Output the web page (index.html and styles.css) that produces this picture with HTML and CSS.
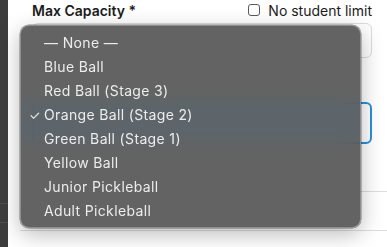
FILE: index.html
```html
<!DOCTYPE html>
<html>
<head>
<meta charset="utf-8">
<link rel="stylesheet" href="styles.css">
</head>
<body>
<div class="page">
  <aside class="sidebar">
    <div class="side-line first"></div>
    <div class="side-line"></div>
  </aside>
  <main class="main">
    <div class="label-row">
      <span class="label">Max Capacity *</span>
      <label class="check"><span class="box"></span>No student limit</label>
    </div>
    <div class="input plain"></div>
    <div class="input focused"></div>
    <div class="rule first-rule"></div>
    <div class="rule"></div>
  </main>
</div>
<ul class="menu">
  <li class="item">— None —</li>
  <li class="item">Blue Ball</li>
  <li class="item">Red Ball (Stage 3)</li>
  <li class="item selected"><span class="tick">✓</span>Orange Ball (Stage 2)</li>
  <li class="item">Green Ball (Stage 1)</li>
  <li class="item">Yellow Ball</li>
  <li class="item">Junior Pickleball</li>
  <li class="item">Adult Pickleball</li>
</ul>
</body>
</html>
```
FILE: styles.css
```css
html, body {
  margin: 0;
  padding: 0;
  background: #ffffff;
  width: 387px;
  height: 247px;
  overflow: hidden;
  font-family: Inter, "Liberation Sans", sans-serif;
}
.page {
  display: flex;
  height: 247px;
}
.sidebar {
  width: 8px;
  flex: none;
  background: #3d3d3d;
  display: flex;
  flex-direction: column;
}
.side-line {
  height: 1px;
  background: #4d4d4d;
  margin-top: 18px;
}
.side-line.first {
  margin-top: 203px;
}
.main {
  flex: 1;
  padding: 0 15px 0 24px;
  display: flex;
  flex-direction: column;
}
.label-row {
  display: flex;
  justify-content: space-between;
  align-items: center;
  height: 20px;
  padding-left: 0;
}
.label {
  font-size: 14px;
  font-weight: 600;
  color: #1c1c1c;
}
.check {
  display: flex;
  align-items: center;
  font-size: 14px;
  color: #1c1c1c;
}
.box {
  width: 10px;
  height: 10px;
  border: 1.5px solid #5a5a5a;
  border-radius: 3px;
  margin-right: 8px;
}
.input {
  box-sizing: border-box;
  border-radius: 6px;
  background: #ffffff;
}
.plain {
  margin-top: 3px;
  height: 35px;
  border: 1px solid #dcdcdc;
}
.focused {
  margin-top: 44px;
  height: 42px;
  border: 2px solid #2a90d8;
}
.rule {
  height: 1px;
  background: #dedede;
  margin-top: 47px;
  margin-left: -12px;
  margin-right: -15px;
}
.rule + .rule {
  margin-top: 38px;
}
.menu {
  position: absolute;
  left: 20px;
  top: 25px;
  width: 341px;
  height: 203px;
  box-sizing: border-box;
  margin: 0;
  padding: 5px 0 5px;
  list-style: none;
  background-color: rgba(82, 82, 82, 0.9);
  background-image: linear-gradient(to bottom,
    rgba(70, 110, 140, 0) 66px,
    rgba(70, 110, 140, 0.16) 80px,
    rgba(70, 110, 140, 0.16) 108px,
    rgba(70, 110, 140, 0) 124px);
  backdrop-filter: blur(14px);
  border: 1px solid #8e8e8e;
  border-radius: 9px;
  box-shadow: 0 0 0 0.5px rgba(0, 0, 0, 0.45), 0 6px 22px rgba(0, 0, 0, 0.28);
}
.item {
  position: relative;
  height: 24px;
  line-height: 24px;
  padding-left: 23px;
  font-size: 14px;
  letter-spacing: 0.35px;
  color: #ececec;
  white-space: nowrap;
}
.tick {
  position: absolute;
  left: 8px;
  top: 0;
  font-size: 13px;
  letter-spacing: 0;
}
```
